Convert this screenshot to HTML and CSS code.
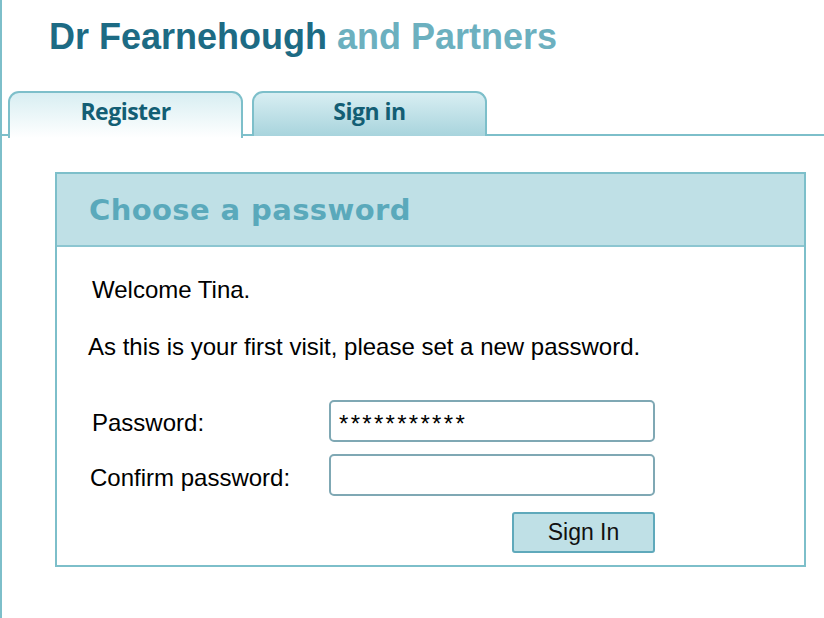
FILE: index.html
```html
<!DOCTYPE html>
<html>
<head>
<meta charset="utf-8">
<link rel="stylesheet" href="styles.css">
</head>
<body>
<div class="page">
  <h1 class="title"><span class="dark">Dr Fearnehough</span> <span class="light">and Partners</span></h1>
  <div class="tabs">
    <div class="tab active">Register</div>
    <div class="tab">Sign in</div>
  </div>
  <div class="panel">
    <div class="panel-head">Choose a password</div>
    <div class="panel-body">
      <p class="welcome">Welcome Tina.</p>
      <p class="intro">As this is your first visit, please set a new password.</p>
      <div class="form">
        <div class="row">
          <label class="label">Password:</label>
          <div class="input">***********</div>
        </div>
        <div class="row row2">
          <label class="label label2">Confirm password:</label>
          <div class="input"></div>
        </div>
        <div class="actions">
          <button class="btn">Sign In</button>
        </div>
      </div>
    </div>
  </div>
</div>
</body>
</html>
```
FILE: styles.css
```css
html, body {
  margin: 0;
  padding: 0;
  background: #fff;
}
.page {
  border-left: 2px solid #7dbfca;
  min-height: 618px;
  box-sizing: border-box;
  font-family: "Liberation Sans", Arial, sans-serif;
}
.title {
  margin: 0;
  padding: 17px 0 0 47px;
  font-size: 36px;
  line-height: 40px;
  font-weight: bold;
  height: 72px;
  box-sizing: border-box;
}
.dark { color: #1d6b84; }
.light { color: #6cb0bf; }
.tabs {
  display: flex;
  gap: 9px;
  padding-left: 6px;
  border-bottom: 2px solid #7dbfca;
  height: 45px;
  box-sizing: border-box;
  margin-top: 19px;
}
.tab {
  width: 235px;
  height: 45px;
  box-sizing: border-box;
  border: 2px solid #7dbfca;
  border-bottom: none;
  border-radius: 11px 11px 0 0;
  background: linear-gradient(#d8eef2, #a8d4dd);
  color: #135e74;
  font-family: "Open Sans", sans-serif;
  font-weight: 700;
  font-size: 23px;
  letter-spacing: -0.5px;
  text-align: center;
  line-height: 36px;
}
.tab.active {
  background: linear-gradient(#d8eef2, #ffffff);
  height: 47px;
  margin-bottom: -2px;
}
.panel {
  margin: 36px 0 0 53px;
  width: 751px;
  border: 2px solid #7dbfca;
  box-sizing: border-box;
  height: 395px;
}
.panel-head {
  background: #bfe0e6;
  border-bottom: 2px solid #8cc6d1;
  height: 73px;
  box-sizing: border-box;
  padding-left: 32px;
  font-family: "DejaVu Sans", Verdana, sans-serif;
  font-weight: bold;
  font-size: 29px;
  line-height: 72px;
  color: #5aa9bb;
  letter-spacing: 0.4px;
}
.panel-body {
  font-size: 24px;
  color: #000;
}
.welcome {
  margin: 0;
  padding: 29px 0 0 35px;
  line-height: 28px;
}
.intro {
  margin: 0;
  padding: 29px 0 0 31px;
  line-height: 28px;
}
.form {
  padding-top: 39px;
  width: 598px;
}
.row {
  display: flex;
  align-items: center;
  height: 42px;
}
.row2 { margin-top: 12px; }
.label {
  width: 237px;
  padding: 3px 0 0 35px;
}
.label2 {
  padding: 6px 0 0 33px;
  width: 239px;
}
.input {
  width: 326px;
  height: 42px;
  box-sizing: border-box;
  border: 2px solid #7fa8b4;
  border-radius: 5px;
  padding: 0 8px;
  font-size: 24px;
  line-height: 44px;
  letter-spacing: 2.3px;
}
.actions {
  display: flex;
  justify-content: flex-end;
  margin-top: 16px;
}
.btn {
  width: 143px;
  height: 41px;
  background: #bfe0e6;
  border: 2px solid #5fa9bb;
  border-radius: 3px;
  font-family: "Liberation Sans", Arial, sans-serif;
  font-size: 23px;
  color: #111;
  padding: 0;
}
```
